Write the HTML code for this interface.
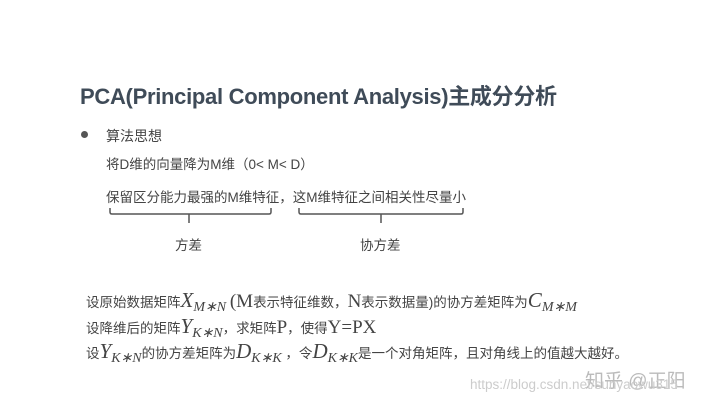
<!DOCTYPE html>
<html><head><meta charset="utf-8"><style>
body{margin:0;width:720px;height:405px;background:#fff;position:relative;overflow:hidden;font-family:"Liberation Sans","Noto Sans CJK SC",sans-serif;color:#444}
.a{position:absolute;white-space:nowrap}
.t{left:80px;top:79px;font-size:22px;font-weight:bold;color:#3f4b58;letter-spacing:-0.3px}
.s{font-size:13.5px;color:#444}
.b{font-size:13.5px;color:#444}
.m{font-family:"Liberation Serif","Noto Serif CJK SC",serif;font-style:italic;font-size:21px}
.m sub{font-size:14px;vertical-align:-4px}
.r{font-family:"Liberation Serif",serif;font-size:19px}
</style></head><body>
<div class="a t">PCA(Principal Component Analysis)主成分分析</div>
<div class="a" style="left:81px;top:131px;width:7px;height:7px;border-radius:50%;background:#555"></div>
<div class="a s" style="left:106px;top:126px;font-size:14px">算法思想</div>
<div class="a s" style="left:106px;top:153px">将D维的向量降为M维（0&lt; M&lt; D）</div>
<div class="a s" style="left:106px;top:186px">保留区分能力最强的M维特征，这M维特征之间相关性尽量小</div>
<svg class="a" style="left:0;top:0" width="720" height="405">
<path d="M110 208v4q0 2 2 2h157q2 0 2-2v-4M189 214v9M299 208v4q0 2 2 2h160q2 0 2-2v-4M381 214v9" fill="none" stroke="#555" stroke-width="1.5"/>
</svg>
<div class="a s" style="left:175px;top:234px">方差</div>
<div class="a s" style="left:360px;top:234px">协方差</div>
<div class="a b" style="left:86px;top:288px">设原始数据矩阵<span class="m">X<sub>M∗N</sub></span> <span class="r">(M</span>表示特征维数，<span class="r">N</span>表示数据量)的协方差矩阵为<span class="m">C<sub>M∗M</sub></span></div>
<div class="a b" style="left:86px;top:314px">设降维后的矩阵<span class="m">Y<sub>K∗N</sub></span>，求矩阵<span class="r">P</span>，使得<span class="r">Y=PX</span></div>
<div class="a b" style="left:86px;top:339px">设<span class="m">Y<sub>K∗N</sub></span>的协方差矩阵为<span class="m">D<sub>K∗K</sub></span> ，令<span class="m">D<sub>K∗K</sub></span>是一个对角矩阵，且对角线上的值越大越好。</div>
<div class="a" style="left:585px;top:366px;font-size:19px;color:#bbb">知乎 @正阳</div>
<div class="a" style="left:470px;top:377px;font-size:13.5px;color:#ccc">https://blog.csdn.net/sunyaowu315</div>
</body></html>
